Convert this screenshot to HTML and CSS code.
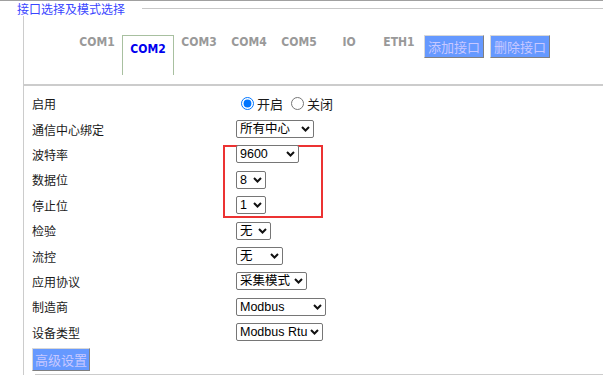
FILE: index.html
```html
<!DOCTYPE html>
<html lang="zh-CN">
<head>
<meta charset="UTF-8">
<meta name="viewport" content="width=device-width, initial-scale=1.0">
<title>接口选择及模式选择</title>
<link rel="stylesheet" href="styles.css">
</head>
<body>

<div class="frame">
  <div class="legend-row">
    <span class="legend">接口选择及模式选择</span>
    <span class="legend-line"></span>
  </div>

  <div class="panel">
    <div class="tabs">
      <a class="tab">COM1</a>
      <a class="tab active">COM2</a>
      <a class="tab">COM3</a>
      <a class="tab">COM4</a>
      <a class="tab">COM5</a>
      <a class="tab">IO</a>
      <a class="tab">ETH1</a>
      <button type="button" class="btn">添加接口</button>
      <button type="button" class="btn">删除接口</button>
    </div>

    <div class="form">
      <div class="mark"></div>

      <div class="row">
        <span class="label">启用</span>
        <div class="ctrl">
          <label class="radio"><input type="radio" name="enable" checked>开启</label>
          <label class="radio"><input type="radio" name="enable">关闭</label>
        </div>
      </div>

      <div class="row">
        <span class="label">通信中心绑定</span>
        <span class="sel">
          <select class="sel-center">
            <option>所有中心</option>
            <option>中心1</option>
            <option>中心2</option>
          </select>
          <svg class="arrow" width="9" height="6" viewBox="0 0 9 6"><path d="M1 1L4.5 4.5L8 1"/></svg>
        </span>
      </div>

      <div class="row">
        <span class="label">波特率</span>
        <span class="sel">
          <select class="sel-baud">
            <option>1200</option>
            <option>2400</option>
            <option>4800</option>
            <option selected>9600</option>
            <option>19200</option>
            <option>38400</option>
            <option>57600</option>
            <option>115200</option>
          </select>
          <svg class="arrow" width="9" height="6" viewBox="0 0 9 6"><path d="M1 1L4.5 4.5L8 1"/></svg>
        </span>
      </div>

      <div class="row">
        <span class="label">数据位</span>
        <span class="sel">
          <select class="sel-small">
            <option>7</option>
            <option selected>8</option>
          </select>
          <svg class="arrow" width="9" height="6" viewBox="0 0 9 6"><path d="M1 1L4.5 4.5L8 1"/></svg>
        </span>
      </div>

      <div class="row">
        <span class="label">停止位</span>
        <span class="sel">
          <select class="sel-small">
            <option selected>1</option>
            <option>2</option>
          </select>
          <svg class="arrow" width="9" height="6" viewBox="0 0 9 6"><path d="M1 1L4.5 4.5L8 1"/></svg>
        </span>
      </div>

      <div class="row">
        <span class="label">检验</span>
        <span class="sel">
          <select class="sel-parity">
            <option>无</option>
            <option>奇</option>
            <option>偶</option>
          </select>
          <svg class="arrow" width="9" height="6" viewBox="0 0 9 6"><path d="M1 1L4.5 4.5L8 1"/></svg>
        </span>
      </div>

      <div class="row">
        <span class="label">流控</span>
        <span class="sel">
          <select class="sel-flow">
            <option>无</option>
            <option>硬件</option>
            <option>软件</option>
          </select>
          <svg class="arrow" width="9" height="6" viewBox="0 0 9 6"><path d="M1 1L4.5 4.5L8 1"/></svg>
        </span>
      </div>

      <div class="row">
        <span class="label">应用协议</span>
        <span class="sel">
          <select class="sel-proto">
            <option>采集模式</option>
            <option>透传模式</option>
          </select>
          <svg class="arrow" width="9" height="6" viewBox="0 0 9 6"><path d="M1 1L4.5 4.5L8 1"/></svg>
        </span>
      </div>

      <div class="row">
        <span class="label">制造商</span>
        <span class="sel">
          <select class="sel-vendor">
            <option>Modbus</option>
          </select>
          <svg class="arrow" width="9" height="6" viewBox="0 0 9 6"><path d="M1 1L4.5 4.5L8 1"/></svg>
        </span>
      </div>

      <div class="row">
        <span class="label">设备类型</span>
        <span class="sel">
          <select class="sel-type">
            <option>Modbus Rtu</option>
            <option>Modbus Tcp</option>
          </select>
          <svg class="arrow" width="9" height="6" viewBox="0 0 9 6"><path d="M1 1L4.5 4.5L8 1"/></svg>
        </span>
      </div>
    </div>

    <button type="button" class="btn adv">高级设置</button>
    <div class="bottom-line"></div>
  </div>
</div>

</body>
</html>
```

FILE: styles.css
```css
body {
  margin: 0;
  font-family: "Noto Sans CJK SC", "Noto Sans", sans-serif;
  font-size: 12px;
  color: #1a1a1a;
  background: #fff;
}
.frame {
  border-top: 1px solid #a0a0a0;
}
.legend-row {
  display: flex;
  align-items: center;
  height: 15px;
  padding-left: 17px;
}
.legend {
  font-size: 12px;
  line-height: 15px;
  color: #3a46ff;
}
.legend-line {
  flex: 1;
  margin-left: 17px;
  border-top: 1px solid #c8c8c8;
}
.panel {
  margin-left: 23px;
  border-left: 1px solid #ccc;
}
.tabs {
  display: flex;
  align-items: flex-start;
  padding: 19px 0 9px 48px;
  border-bottom: 2px solid #ccc;
}
.tab {
  width: 50px;
  text-align: center;
  font-family: "DejaVu Sans Condensed", "DejaVu Sans", sans-serif;
  font-weight: bold;
  font-size: 12px;
  line-height: 14px;
  color: #999;
  cursor: pointer;
}
.tab.active {
  border: 1px solid #a8c0a0;
  border-bottom: none;
  padding: 6px 0 19px;
  color: #0000ee;
}
.btn {
  height: 23px;
  padding: 0 3px;
  margin-right: 6px;
  font-family: "Noto Sans CJK SC", sans-serif;
  font-size: 13px;
  line-height: 21px;
  white-space: nowrap;
  color: #c8c8ff;
  background-color: #6699ff;
  border: 1px solid;
  border-color: #d8d8d8 #808080 #808080 #d8d8d8;
  cursor: pointer;
}
.form {
  position: relative;
  padding-top: 5px;
}
.row {
  display: flex;
  align-items: center;
  height: 25.4px;
  padding-left: 8px;
}
.label {
  width: 204px;
}
.ctrl {
  display: flex;
  align-items: center;
}
.radio {
  display: flex;
  align-items: center;
  font-size: 13px;
  margin-right: 3px;
}
.radio input {
  margin: 0 3px 0 5px;
  width: 13px;
  height: 13px;
}
.sel {
  position: relative;
  display: inline-flex;
}
select {
  -webkit-appearance: none;
  appearance: none;
  height: 18px;
  padding: 0 0 0 3px;
  font-family: "Liberation Sans", "Noto Sans CJK SC", sans-serif;
  font-size: 12.5px;
  line-height: 16px;
  color: #000;
  background: #fff;
  border: 1px solid #767676;
  border-radius: 2px;
}
.arrow {
  position: absolute;
  right: 4px;
  top: 6px;
  pointer-events: none;
}
.arrow path {
  fill: none;
  stroke: #111;
  stroke-width: 2;
}
.sel-center { width: 78px; }
.sel-baud { width: 63px; }
.sel-small { width: 30px; }
.sel-parity { width: 35px; }
.sel-flow { width: 47px; }
.sel-proto { width: 71px; }
.sel-vendor { width: 90px; }
.sel-type { width: 87px; }
.mark {
  position: absolute;
  left: 199px;
  top: 59px;
  width: 96px;
  height: 69px;
  border: 2px solid #ec3232;
}
.adv {
  margin: 3px 0 0 8px;
  padding: 0 2px;
}
.bottom-line {
  margin: 3px 0 0 11px;
  border-top: 2px solid #ccc;
}
```
